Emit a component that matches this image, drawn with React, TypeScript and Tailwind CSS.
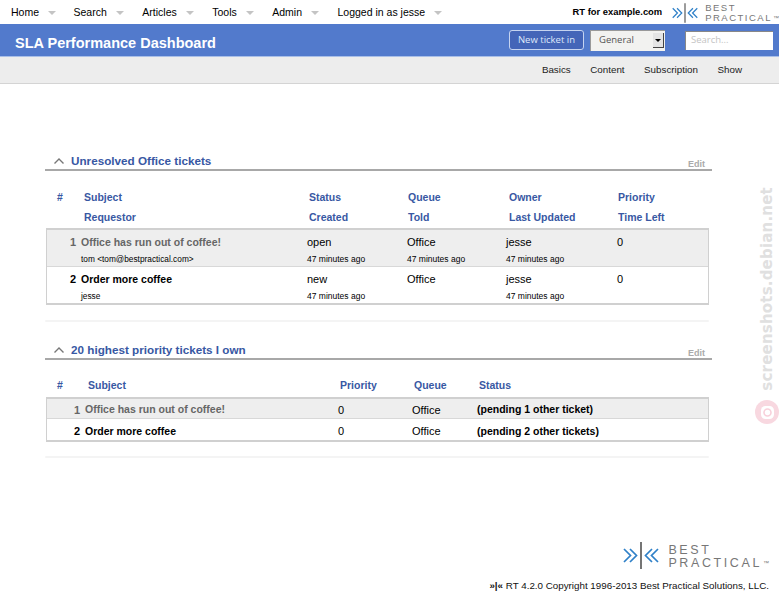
import React from 'react';

const navItems = ['Home', 'Search', 'Articles', 'Tools', 'Admin', 'Logged in as jesse'];
const pageMenu = ['Basics', 'Content', 'Subscription', 'Show'];

const firstCols = 'grid grid-cols-[27px_225px_99px_101px_109px_1fr] h-[20px] items-center';
const secondCols = 'grid grid-cols-[31px_252px_74px_65px_1fr] h-[20px] items-center';
const ticketCols = 'grid grid-cols-[34px_226px_100px_99px_111px_1fr] pb-[2px]';
const ownCols = 'grid grid-cols-[38px_253px_74px_65px_1fr] items-center';

const Logo = ({ big }: { big?: boolean }) => (
  <div className={big ? 'flex items-center gap-[9px]' : 'flex items-center gap-[7px]'}>
    <svg width={big ? 36 : 26} height={big ? 27 : 20} viewBox="0 0 36 27" fill="none" stroke="#2f80c8" strokeWidth="1.7">
      <path d="M1 7l6.5 6.5L1 20M7 7l6.5 6.5L7 20" />
      <path d="M18 0v27" stroke="#666" strokeWidth="1.8" />
      <path d="M35 7l-6.5 6.5L35 20M29 7l-6.5 6.5L29 20" />
    </svg>
    <div
      className={
        big
          ? 'pt-[4px] text-[12.5px] leading-[13px] tracking-[2.6px] text-[#777]'
          : 'text-[9.5px] leading-[10px] tracking-[1.5px] text-[#777]'
      }
    >
      <div>BEST</div>
      <div>
        PRACTICAL<span className="ml-[1px] text-[6px] align-top tracking-normal">™</span>
      </div>
    </div>
  </div>
);

const Section = ({ title, children }: { title: string; children: React.ReactNode }) => (
  <section className="w-[667px]">
    <div className="flex items-center h-[20px] pt-[2px] border-b-2 border-[#a8a8a8]">
      <svg width="12" height="8" viewBox="0 0 12 8" fill="none" stroke="#777" strokeWidth="1.4" className="ml-[8px] mr-[6px]">
        <path d="M1.5 6.5L6 2l4.5 4.5" />
      </svg>
      <h2 className="text-[11.7px] font-bold text-[#3858a3]">{title}</h2>
      <span className="ml-auto mr-[7px] mt-[7px] text-[9px] font-bold text-[#aaa]">Edit</span>
    </div>
    {children}
  </section>
);

const Divider = () => <div className="w-[664px] h-[2px] bg-[#f4f4f4] rounded-full" />;

const Main = ({ bold, muted, children }: { bold?: boolean; muted?: boolean; children?: React.ReactNode }) => (
  <span className={'h-[24px] leading-[24px] ' + (bold ? 'font-bold text-[10.5px] ' : '') + (muted ? 'text-[#666]' : '')}>{children}</span>
);

const Small = ({ children }: { children?: React.ReactNode }) => (
  <span className="h-[10px] leading-[10px] text-[8.5px]">{children}</span>
);

export default function App() {
  return (
    <div className="relative w-[779px] h-[600px] overflow-hidden bg-white text-black font-['Liberation_Sans',Arial,sans-serif]">
      {/* top nav */}
      <nav className="flex items-center h-[24px] pl-[11px] pt-[1px] gap-[18.5px] text-[10.5px]">
        {navItems.map((item, i) => (
          <div key={item} className={i === 0 ? 'flex items-center -mr-[1px]' : 'flex items-center'}>
            <span>{item}</span>
            <span className="ml-[9px] w-0 h-0 border-x-[4px] border-x-transparent border-t-[4px] border-t-[#c4c4c4]" />
          </div>
        ))}
        <span className="ml-auto -mr-[8.5px] text-[9.4px] font-bold">RT for example.com</span>
        <Logo />
      </nav>

      {/* title bar */}
      <header className="flex items-center h-[33px] pl-[15px] bg-[#527acc] border-b border-[#a9bfe8]">
        <h1 className="mt-[7px] text-[14.5px] font-bold text-white">SLA Performance Dashboard</h1>
        <div className="ml-auto flex items-center font-['Open_Sans',sans-serif] text-[9.5px]">
          <button className="w-[75px] h-[20px] rounded-[3px] bg-[#4465b8] border border-[#c6d4f0] text-[#dfe8fa]">
            New ticket in
          </button>
          <div className="flex items-center ml-[6px] w-[75px] h-[21px] pl-[8px] pr-[1px] bg-[#f2f2f0] border-l border-t border-[#999] text-[#555]">
            General
            <span className="ml-auto flex items-center justify-center w-[11px] h-[15px] bg-[#e4e4e4] border-r border-b border-[#444]">
              <span className="w-0 h-0 border-x-[3px] border-x-transparent border-t-[3px] border-t-black" />
            </span>
          </div>
          <div className="flex items-center ml-[20px] mr-[6px] w-[88px] h-[19px] pl-[5px] bg-white border-l border-t border-[#888] text-[#c4c4c4]">
            Search...
          </div>
        </div>
      </header>

      {/* page menu */}
      <div className="flex items-center justify-end h-[27px] pr-[37px] gap-[19.5px] bg-[#ededed] border-b border-[#d4d4d4] text-[9.8px] text-[#222]">
        {pageMenu.map((m) => (
          <span key={m}>{m}</span>
        ))}
      </div>

      <main className="ml-[45px] pt-[67px]">
        <Section title="Unresolved Office tickets">
          <div className="pl-[12px] pt-[17px] text-[10.5px] font-bold text-[#3858a3]">
            <div className={firstCols}>
              <span>#</span><span>Subject</span><span>Status</span><span>Queue</span><span>Owner</span><span>Priority</span>
            </div>
            <div className={firstCols}>
              <span /><span>Requestor</span><span>Created</span><span>Told</span><span>Last Updated</span><span>Time Left</span>
            </div>
          </div>
          <div className="ml-[1px] w-[663px] border-y-2 border-x border-[#d0d0d0] text-[11px]">
            <div className={ticketCols + ' bg-[#eeeeee] border-b border-[#d8d8d8]'}>
              <span className="h-[24px] leading-[24px] text-right pr-[5px] font-bold text-[#666]">1</span>
              <Main bold muted>Office has run out of coffee!</Main>
              <Main>open</Main>
              <Main>Office</Main>
              <Main>jesse</Main>
              <Main>0</Main>
              <Small />
              <span className="h-[10px] leading-[10px] text-[8.3px]">tom &lt;tom@bestpractical.com&gt;</span>
              <Small>47 minutes ago</Small>
              <Small>47 minutes ago</Small>
              <Small>47 minutes ago</Small>
              <Small />
            </div>
            <div className={ticketCols}>
              <span className="h-[24px] leading-[24px] text-right pr-[5px] font-bold">2</span>
              <Main bold>Order more coffee</Main>
              <Main>new</Main>
              <Main>Office</Main>
              <Main>jesse</Main>
              <Main>0</Main>
              <Small />
              <span className="h-[10px] leading-[10px] text-[8.3px]">jesse</span>
              <Small>47 minutes ago</Small>
              <Small />
              <Small>47 minutes ago</Small>
              <Small />
            </div>
          </div>
        </Section>

        <div className="mt-[15px] mb-[18px]"><Divider /></div>

        <Section title="20 highest priority tickets I own">
          <div className="pl-[12px] pt-[16px] pb-[1px] text-[10.5px] font-bold text-[#3858a3]">
            <div className={secondCols}>
              <span>#</span><span>Subject</span><span>Priority</span><span>Queue</span><span>Status</span>
            </div>
          </div>
          <div className="ml-[1px] w-[663px] border-y-2 border-x border-[#d0d0d0] text-[11px]">
            <div className={ownCols + ' h-[20px] pt-[3px] bg-[#eeeeee] border-b border-[#d8d8d8]'}>
              <span className="text-right pr-[5px] font-bold text-[#666]">1</span>
              <span className="font-bold text-[10.5px] text-[#666]">Office has run out of coffee!</span>
              <span>0</span>
              <span>Office</span>
              <span className="font-bold text-[10.5px]">(pending 1 other ticket)</span>
            </div>
            <div className={ownCols + ' h-[21px] pt-[4px]'}>
              <span className="text-right pr-[5px] font-bold">2</span>
              <span className="font-bold text-[10.5px]">Order more coffee</span>
              <span>0</span>
              <span>Office</span>
              <span className="font-bold text-[10.5px]">(pending 2 other tickets)</span>
            </div>
          </div>
        </Section>

        <div className="mt-[14px]"><Divider /></div>
      </main>

      {/* footer */}
      <footer className="absolute right-[10px] bottom-[6px] flex flex-col items-end">
        <Logo big />
        <p className="mt-[9px] text-[9.8px] text-[#111]">
          <span className="font-bold">»|«</span> RT 4.2.0 Copyright 1996-2013 Best Practical Solutions, LLC.
        </p>
      </footer>

      {/* screenshots.debian.net watermark */}
      <div className="absolute left-[756px] top-[187px] flex flex-col items-center w-[22px]">
        <span className="[writing-mode:vertical-rl] rotate-180 font-['DejaVu_Sans',sans-serif] font-bold text-[15px] leading-[22px] tracking-[0.2px] text-[#e0e0e0]">
          screenshots.debian.net
        </span>
        <svg width="24" height="24" viewBox="0 0 24 24" className="mt-[9px] shrink-0">
          <circle cx="12" cy="12" r="12" fill="#f8d8e0" />
          <rect x="6" y="6" width="13" height="13" rx="4.5" fill="#fff" />
          <circle cx="12.5" cy="12.5" r="3.5" fill="none" stroke="#f8d0da" strokeWidth="1.6" />
        </svg>
      </div>
    </div>
  );
}
